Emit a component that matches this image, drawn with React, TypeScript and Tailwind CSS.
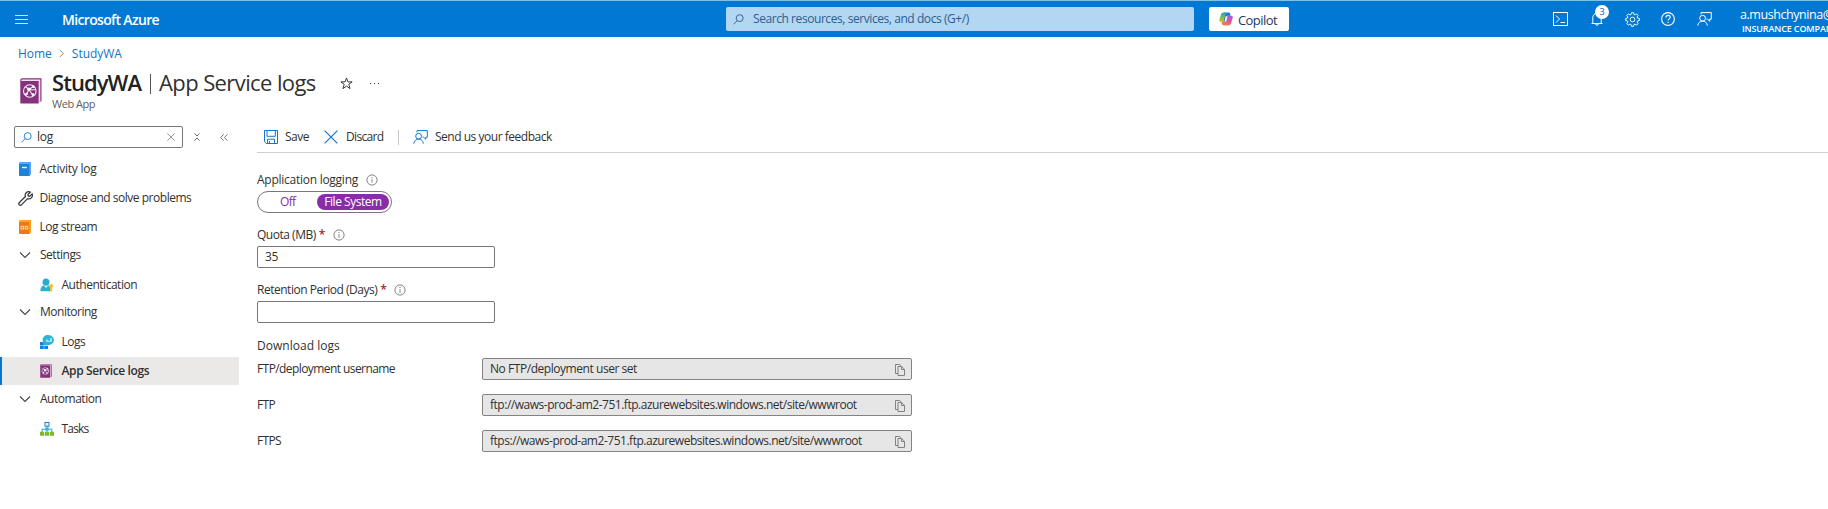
import type { ReactNode } from 'react';

type IconProps = { className?: string };

const Magnifier = ({ className }: IconProps) => (
  <svg viewBox="0 0 12 12" className={className} fill="none" stroke="currentColor" strokeWidth="1">
    <circle cx="7.3" cy="4.5" r="3.8" />
    <path d="M4.500 7.300 .6 11.200" />
  </svg>
);

const Cross = ({ className }: IconProps) => (
  <svg viewBox="0 0 14 14" className={className} fill="none" stroke="currentColor" strokeWidth="1.2">
    <path d="M.6.6l12.8 12.8M13.4.6.6 13.4" />
  </svg>
);

const Chevron = ({ className }: IconProps) => (
  <svg viewBox="0 0 12 12" className={className} fill="none" stroke="currentColor" strokeWidth="1.1">
    <path d="M1 3.5l5 5 5-5" />
  </svg>
);

const Feedback = ({ className }: IconProps) => (
  <svg viewBox="0 0 15 14" className={className} fill="none" stroke="currentColor" strokeWidth="1">
    <circle cx="5.6" cy="6.2" r="2.9" />
    <path d="M.8 13.6c.3-2.7 2.200-4.500 4.800-4.500s4.500 1.800 4.800 4.500" />
    <path d="M4 2.300V.6h10.300v6.600h-1.600v2L10.600 7.200H9.600" />
  </svg>
);

const Info = ({ className }: IconProps) => (
  <svg viewBox="0 0 12 12" className={className} fill="none" stroke="#666" strokeWidth=".8">
    <circle cx="6" cy="6" r="5.100" />
    <path d="M6 5.200v3.600M6 3v1.100" />
  </svg>
);

const Copy = () => (
  <svg viewBox="0 0 10 12" className="mt-px h-3 w-2.5" fill="none" stroke="#777" strokeWidth=".9">
    <path d="M2.800 9.500H.5V.5h4.200l1.300 1.300" />
    <path d="M3 2.500h3.700l2.800 2.800v6.200H3z" />
    <path d="M6.500 2.700v2.800h2.800" />
  </svg>
);

const AppBook = ({ className }: IconProps) => (
  <svg viewBox="0 0 22 26" className={className}>
    <path d="M2.200.3H21.500V23.500H19V3.500H.3V2.200C.3 1 1 .3 2.200.3z" fill="#8a3579" />
    <path d="M1.800 1.500h18.500v21.500H19V3H1.100z" fill="#f3dff0" />
    <path d="M.3 3h18.400v22.600H1.500A1.200 1.200 0 0 1 .3 24.400z" fill="#86317d" />
    <g fill="none" stroke="#f6eaf5" strokeWidth="1.100">
      <circle cx="9.800" cy="13" r="6.300" />
      <path d="M5.500 8.800 9 11.500l6.800.3M9 11.500 6 17.300M9 11.500l4 6.200M13.500 8.200 9 11.500" />
    </g>
    <circle cx="8.800" cy="11.200" r="1.700" fill="#fff" />
    <circle cx="6.500" cy="16" r="1.300" fill="#fff" />
    <circle cx="13" cy="16.500" r="1.300" fill="#fff" />
    <circle cx="13.500" cy="8.800" r="1.200" fill="#fff" />
  </svg>
);

const BlueBook = () => (
  <svg viewBox="0 0 12 14" className="h-[14px] w-[12px]">
    <path d="M1.500 0H12v12.800h-1V1.500H0C0 .5.500 0 1.500 0z" fill="#5ea0ef" />
    <path d="M0 1.600h10.800V14H1a1 1 0 0 1-1-1z" fill="#1f82d4" />
    <path d="M3 5.500h4.800" stroke="#fff" strokeWidth="1.400" />
  </svg>
);

const OrangeBook = () => (
  <svg viewBox="0 0 12 14" className="h-[14px] w-[12px]">
    <path d="M1.500 0H12v12.800h-1V1.500H0C0 .5.500 0 1.500 0z" fill="#faa21d" />
    <path d="M0 1.600h10.800V14H1a1 1 0 0 1-1-1z" fill="#ec7a10" />
    <g fill="none" stroke="#fde3c5" strokeWidth=".9">
      <rect x="2" y="6.300" width="2.500" height="2.700" />
      <rect x="6.200" y="6.300" width="2.500" height="2.700" />
    </g>
  </svg>
);

const Wrench = () => (
  <svg viewBox="0 0 15 15" className="-ml-px h-[15px] w-[15px]" fill="none" stroke="#333" strokeWidth="1.200">
    <path d="M12.300 1.100 9.900 3.500l.3 1.400 1.500.4 2.400-2.400c.6 1.600.1 3.200-1 4.200-1 .9-2.400 1-3.500.6l-6 6c-.7.700-1.700.7-2.300.1-.6-.6-.6-1.600.1-2.300l6-6c-.5-1.400-.3-2.800.8-3.800C9.300.7 10.900.5 12.300 1.100z" />
  </svg>
);

const Person = () => (
  <svg viewBox="0 0 14 14" className="h-[14px] w-[14px]">
    <path d="M.3 12.200C.6 8.800 2.400 7 6 7s5.400 1.800 5.800 5.200c0 .6-.3 1-.9 1H1.200c-.6 0-.9-.4-.9-1z" fill="#29b3d3" />
    <path d="M3.600 7.300 6 10l2.500-2.700z" fill="#d7f3fa" />
    <circle cx="6" cy="3.900" r="3.500" fill="#2fa9cf" />
    <path d="M11.200 5.600 13.800 8l-1.600 1.700v3.200l-1.200.9-1-1V9.700L8.700 8z" fill="#f6c12d" />
  </svg>
);

const LogsIcon = () => (
  <svg viewBox="0 0 14 14" className="h-[14px] w-[14px]">
    <path d="M0 7h3.800v3.300H0zM0 10.700h3.800V14H0zM4.200 10.700H8V14H4.200z" fill="#1c7fd6" />
    <path d="M9 .2a4.900 4.900 0 0 1 0 9.800H5.300l-1.600.6.400-2.300A4.900 4.900 0 0 1 9 .2z" fill="#2ab4dc" />
    <path d="M7 4.500v2.600M9 5.400v1.700M11 3v4.100" stroke="#fff" strokeWidth="1.100" />
  </svg>
);

const TasksIcon = () => (
  <svg viewBox="0 0 14 14" className="h-[14px] w-[14px]">
    <path d="M7 4v3M2.200 10V7.200h9.600V10M7 7v3" fill="none" stroke="#35a9dc" strokeWidth="1.100" />
    <rect x="5" y=".5" width="4" height="3.700" fill="#e8f6fd" stroke="#2480cf" />
    <rect x="5.200" y="5.600" width="3.600" height="3" fill="#35b5e3" />
    <path d="M0 9.800h4.200v4H0zM4.900 9.800h4.200v4H4.900zM9.800 9.800H14v4H9.800z" fill="#7cba2c" />
  </svg>
);

const CopilotIcon = () => (
  <svg viewBox="0 0 14 14" className="h-[14px] w-[14px]">
    <defs>
      <linearGradient id="cpTop" x1="0" y1="0" x2="1" y2="0.6">
        <stop offset="0" stopColor="#1aa4e0" />
        <stop offset="1" stopColor="#2056d6" />
      </linearGradient>
      <linearGradient id="cpLeft" x1="0.300" y1="0" x2="0.500" y2="1">
        <stop offset="0" stopColor="#1f9bd8" />
        <stop offset=".5" stopColor="#6cc04a" />
        <stop offset="1" stopColor="#f5b81c" />
      </linearGradient>
      <linearGradient id="cpRight" x1="0.700" y1="0" x2="0.300" y2="1">
        <stop offset="0" stopColor="#a35be0" />
        <stop offset=".5" stopColor="#e0569a" />
        <stop offset="1" stopColor="#f7853d" />
      </linearGradient>
    </defs>
    <path d="M4.800.5h4.600c.9 0 1.400.5 1.700 1.400l.5 1.900H9.300c-.8 0-1.300.3-1.600 1.200L6.500 9.500H3z" fill="url(#cpTop)" />
    <path d="M4.800.5h1.800L4.900 8.600c-.2.800-.7 1.200-1.500 1.200H1.700C.5 9.800 0 9 .3 7.900l1.700-5.500C2.400 1.200 3.300.5 4.800.5z" fill="url(#cpLeft)" />
    <path d="M9.200 13.500H4.600c-.9 0-1.400-.5-1.700-1.400l-.5-2.300h2.300c.8 0 1.300-.3 1.600-1.200l1.200-3.600C7.800 4.100 8.500 3.800 9.300 3.800h3c1.200 0 1.700.8 1.400 1.900L12 11.600c-.4 1.200-1.300 1.900-2.800 1.900z" fill="url(#cpRight)" />
    <path d="M6.700 4.300h1.700L7.200 9.600H5.600z" fill="#fff" />
  </svg>
);

const Save = () => (
  <svg viewBox="0 0 14 14" className="h-[14px] w-[14px]" fill="none" stroke="#1377cf" strokeWidth="1">
    <path d="M.5.500h13v13H2.300L.5 11.700z" />
    <path d="M3 .5v5.800h8.300V.5M3.500 13.500V9.200h7v4.300M5.500 11v2.500" />
  </svg>
);

const Terminal = () => (
  <svg viewBox="0 0 15 14" className="h-[14px] w-[15px]" fill="none" stroke="#fff" strokeWidth="1">
    <rect x=".5" y=".5" width="14" height="13" />
    <path d="M3 3.500 6.500 7 3 10.500M7.500 10.500H12" />
  </svg>
);

const Bell = () => (
  <svg viewBox="0 0 12 14" className="h-[14px] w-[12px]" fill="none" stroke="#fff" strokeWidth="1">
    <path d="M.5 11.500h11M1.800 11.500V5.500a4.200 4.200 0 0 1 8.400 0v6M4.500 11.700a1.500 1.500 0 0 0 3 0" />
  </svg>
);

const Gear = () => (
  <svg viewBox="0 0 16 16" className="h-[15px] w-[15px]" fill="none" stroke="#fff" strokeWidth="1">
    <path d="M6.900.7h2.200l.4 1.900 1.200.5 1.700-1.100 1.600 1.600-1.100 1.700.5 1.200 1.900.4v2.200l-1.900.4-.5 1.200 1.100 1.700-1.600 1.600-1.700-1.100-1.200.5-.4 1.900H6.900l-.4-1.900-1.200-.5L3.600 14 2 12.400l1.100-1.700-.5-1.200-1.900-.4V6.900l1.900-.4.5-1.200L2 3.600 3.600 2l1.700 1.100 1.200-.5z" />
    <circle cx="8" cy="8" r="2.500" />
  </svg>
);

const Help = () => (
  <svg viewBox="0 0 14 14" className="h-[14px] w-[14px]" fill="none" stroke="#fff" strokeWidth="1.100">
    <circle cx="7" cy="7" r="6.400" />
    <path d="M4.900 5.600c0-1.400.9-2.200 2.200-2.200s2.100.8 2.100 1.900c0 1.500-2.100 1.600-2.100 3.300M7.100 9.700v1.300" />
  </svg>
);

const Star = () => (
  <svg viewBox="0 0 12 12" className="h-[13px] w-[13px]" fill="none" stroke="#333" strokeWidth=".9">
    <path d="M6 .9l1.300 3.600h3.900L8.100 6.800l1.200 3.900L6 8.400l-3.300 2.300 1.200-3.900L.8 4.500h3.900z" />
  </svg>
);

const NavItem = ({ icon, children, sub, selected }: { icon: ReactNode; children: ReactNode; sub?: boolean; selected?: boolean }) => (
  <div
    className={
      'flex h-[28.8px] w-[239px] items-center ' +
      (selected ? 'border-l-2 border-[#0078d4] bg-[#ebe9e8] pl-[38px] font-semibold tracking-[-0.36px] ' : sub ? 'pl-10 ' : 'pl-[19px] ')
    }
  >
    <span className={'flex shrink-0 ' + (sub ? 'w-[21.5px]' : 'w-[20.5px]')}>{icon}</span>
    <span className="whitespace-nowrap">{children}</span>
  </div>
);

const NavGroup = ({ children }: { children: ReactNode }) => (
  <div className="flex h-[28.8px] items-center pb-[2px] pl-[19px]">
    <Chevron className="mr-[9px] h-3 w-3 text-[#444]" />
    {children}
  </div>
);

const CopyField = ({ label, labelClass, value, valueClass }: { label: string; labelClass: string; value: string; valueClass: string }) => (
  <div className="flex h-[22px] items-center">
    <span className={'w-[225px] ' + labelClass}>{label}</span>
    <div className="flex h-[22px] w-[430px] items-center justify-between rounded-[2px] border border-[#858382] bg-[#e6e6e6] pl-[7px] pr-[6px]">
      <span className={'whitespace-nowrap ' + valueClass}>{value}</span>
      <Copy />
    </div>
  </div>
);

export default function App() {
  return (
    <div className="h-[509px] w-full overflow-hidden bg-white font-['Open_Sans','Noto_Sans',sans-serif] text-[12px] leading-4 tracking-[-0.48px] text-[#323130]">
      <header className="flex h-[37px] items-center overflow-hidden border-t border-[#79c4ea] bg-[#0078d4] text-white">
        <div className="ml-[15px] flex w-[47px] shrink-0 flex-col gap-[3px]">
          <i className="h-px w-[13px] bg-white/80" />
          <i className="h-px w-[13px] bg-white/80" />
          <i className="h-px w-[13px] bg-white/80" />
        </div>
        <div className="w-[664px] shrink-0 pt-[2px] text-[14px] font-semibold tracking-[-0.66px]">Microsoft Azure</div>
        <div className="flex h-6 w-[468px] shrink-0 items-center rounded-[2px] bg-[#b3d6f2] pl-[7px] tracking-[-0.43px] text-[#2c5f8f]">
          <Magnifier className="mr-[9px] h-[11px] w-[11px]" />
          Search resources, services, and docs (G+/)
        </div>
        <button className="ml-[15px] flex h-6 w-20 shrink-0 items-center rounded-[2px] bg-white pl-[10px] text-[13px] tracking-[-0.57px] text-[#243a5e]">
          <CopilotIcon />
          <span className="ml-[5px] pt-px">Copilot</span>
        </button>
        <div className="ml-[264px] flex w-[187px] shrink-0 items-center">
          <Terminal />
          <span className="relative ml-[23px]">
            <Bell />
            <span className="absolute -top-[7px] left-[4px] flex h-[14px] w-[14px] items-center justify-center rounded-full bg-white text-[9px] tracking-normal text-[#0067b8]">3</span>
          </span>
          <span className="ml-[22px]"><Gear /></span>
          <span className="ml-[21px]"><Help /></span>
          <Feedback className="ml-[22px] h-[14px] w-[15px]" />
        </div>
        <div className="shrink-0 whitespace-nowrap pt-[5px]">
          <div className="text-[12.5px] leading-[14px] tracking-[-0.44px]">a.mushchynina@outlook.com</div>
          <div className="ml-[2px] text-[9px] font-semibold leading-[14px] tracking-[-0.14px]">INSURANCE COMPANY</div>
        </div>
      </header>

      <nav className="flex h-[33px] items-center pl-[18px] tracking-[-0.02px] text-[#1273c4]">
        Home
        <Chevron className="ml-[5px] mr-[6px] h-[9px] w-[9px] -rotate-90 text-[#777]" />
        StudyWA
      </nav>

      <div className="flex h-[50px] items-start pl-5">
        <AppBook className="mt-[8px] h-[26px] w-[22px]" />
        <div className="ml-[10px] w-[288px]">
          <h1 className="-mt-px flex h-[27px] items-start text-[22px] leading-[26px]">
            <span className="w-[98px] font-semibold tracking-[-0.94px] text-[#222]">StudyWA</span>
            <span className="mt-[5px] h-5 w-px bg-[#555]" />
            <span className="ml-[8px] tracking-[-0.6px]">App Service logs</span>
          </h1>
          <p className="mt-[1px] text-[11px] leading-[14px] tracking-[-0.46px] text-[#605e5c]">Web App</p>
        </div>
        <span className="mt-[7px]"><Star /></span>
        <span className="ml-[17px] mt-[13px] flex gap-[3px]">
          <i className="h-px w-px bg-[#333]" /><i className="h-px w-px bg-[#333]" /><i className="h-px w-px bg-[#333]" />
        </span>
      </div>

      <div className="flex">
        <aside className="w-[257px] shrink-0 pt-[6px]">
          <div className="mb-[7px] flex h-[22px] items-center pl-[14px]">
            <div className="flex h-[22px] w-[169px] items-center rounded-[2px] border border-[#777] pl-[6px] pr-[7px]">
              <Magnifier className="h-[11px] w-[11px] text-[#1377cf]" />
              <span className="ml-[5px] grow tracking-[-0.2px]">log</span>
              <Cross className="h-[8px] w-[8px] text-[#666]" />
            </div>
            <svg viewBox="0 0 6 8" className="ml-[11px] h-[8px] w-[6px]" fill="none" stroke="#555" strokeWidth=".9">
              <path d="M.5.4 3 3 5.500.4M.5 7.600 3 5l2.500 2.600" />
            </svg>
            <svg viewBox="0 0 8 7" className="ml-[20px] h-[7px] w-[8px]" fill="none" stroke="#666" strokeWidth=".9">
              <path d="M3.700.3.6 3.500l3.100 3.200M7.500.3 4.400 3.500l3.100 3.200" />
            </svg>
          </div>
          <NavItem icon={<BlueBook />}><span className="tracking-[-0.24px]">Activity log</span></NavItem>
          <NavItem icon={<Wrench />}>Diagnose and solve problems</NavItem>
          <NavItem icon={<OrangeBook />}>Log stream</NavItem>
          <NavGroup>Settings</NavGroup>
          <NavItem sub icon={<Person />}>Authentication</NavItem>
          <NavGroup>Monitoring</NavGroup>
          <NavItem sub icon={<LogsIcon />}>Logs</NavItem>
          <NavItem sub selected icon={<AppBook className="h-[14px] w-[12px]" />}>App Service logs</NavItem>
          <NavGroup>Automation</NavGroup>
          <NavItem sub icon={<TasksIcon />}><span className="tracking-[-0.8px]">Tasks</span></NavItem>
        </aside>

        <main className="grow">
          <div className="flex h-[33px] items-center border-b border-[#d2d0ce] pl-[7px] pt-[2px]">
            <Save />
            <span className="ml-[7px] w-[39px]">Save</span>
            <Cross className="h-[14px] w-[14px] text-[#1377cf]" />
            <span className="ml-[8px] w-[52px] tracking-[-0.66px]">Discard</span>
            <span className="h-[15px] w-px bg-[#c8c6c4]" />
            <Feedback className="ml-[14px] h-[14px] w-[15px] text-[#1377cf]" />
            <span className="ml-[7px]">Send us your feedback</span>
          </div>

          <div className="mt-[19px] flex h-4 items-center">
            <span className="tracking-[-0.26px]">Application logging</span>
            <Info className="ml-[8px] h-3 w-3" />
          </div>
          <div className="mt-[3px] flex h-[22px] w-[135px] items-center rounded-full border border-[#777] pl-[22px] pr-[2px]">
            <span className="grow tracking-[-0.7px] text-[#8a2da5]">Off</span>
            <span className="flex h-4 w-[72px] items-center justify-center rounded-full bg-[#8a2da5] text-white">File System</span>
          </div>

          <div className="mt-[14px] flex h-4 items-center">
            Quota (MB)<span className="ml-[3px] font-semibold text-[#a4262c]">*</span>
            <Info className="ml-[8px] h-3 w-3" />
          </div>
          <div className="mt-[3px] flex h-[22px] w-[238px] items-center rounded-[2px] border border-[#777] pl-[7px]">35</div>

          <div className="mt-[14px] flex h-4 items-center">
            Retention Period (Days)<span className="ml-[3px] font-semibold text-[#a4262c]">*</span>
            <Info className="ml-[8px] h-3 w-3" />
          </div>
          <div className="mt-[3px] h-[22px] w-[238px] rounded-[2px] border border-[#777]" />

          <div className="mt-[15px] h-4 tracking-[0.02px]">Download logs</div>
          <div className="mt-[4px] flex flex-col gap-[14px]">
            <CopyField label="FTP/deployment username" labelClass="tracking-[-0.58px]" value="No FTP/deployment user set" valueClass="tracking-[-0.45px]" />
            <CopyField label="FTP" labelClass="tracking-[-0.67px]" value="ftp://waws-prod-am2-751.ftp.azurewebsites.windows.net/site/wwwroot" valueClass="tracking-[-0.48px]" />
            <CopyField label="FTPS" labelClass="tracking-[-0.65px]" value="ftps://waws-prod-am2-751.ftp.azurewebsites.windows.net/site/wwwroot" valueClass="tracking-[-0.48px]" />
          </div>
        </main>
      </div>
    </div>
  );
}
